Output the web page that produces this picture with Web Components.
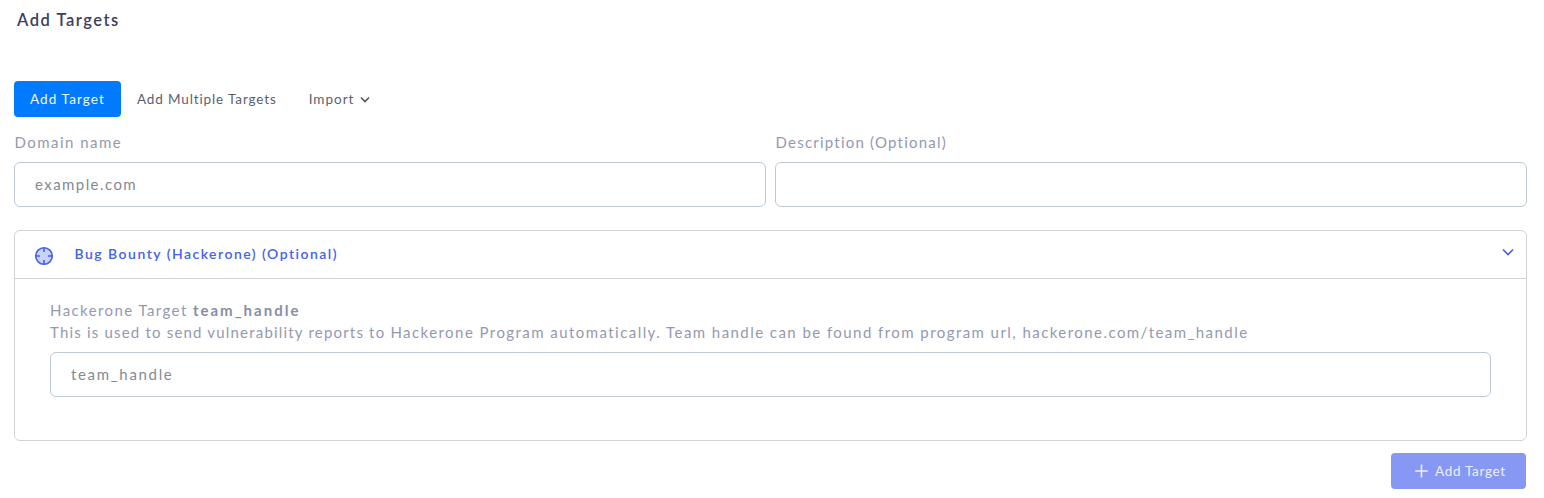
<!DOCTYPE html>
<html lang="en"><head><meta charset="utf-8"><title>Add Targets</title>
<style>body{margin:0;background:#fff;font-family:Lato,"Open Sans",sans-serif}</style></head>
<body>
<target-page></target-page>
<script>
const define = (name, html) => customElements.define(name, class extends HTMLElement {
  constructor() {
    super();
    const t = document.createElement('template');
    t.innerHTML = html;
    this.attachShadow({mode: 'open'}).append(t.content.cloneNode(true));
  }
});
define('tab-item', `<style>
:host{display:flex;align-items:center;box-sizing:border-box;height:36px;padding:0 16px 1px;border-radius:4px;font-size:13.500px;letter-spacing:1.110px;color:#5c5e70;white-space:nowrap}
:host([active]){background:#007bff;color:#f2f8ff}
</style><slot></slot>`);
define('text-field', `<style>
:host{display:block;min-width:0}
.label{height:22px;line-height:20px;font-size:15px;color:#9499b1;letter-spacing:var(--label-ls,1px);white-space:pre;margin-bottom:8px;padding-left:var(--label-pad,.5px)}
.box{box-sizing:border-box;height:45px;border:1px solid #bfc9d4;border-radius:6px;padding:0 20px 2px;display:flex;align-items:center;font-size:15px;color:#858a92;letter-spacing:var(--value-ls,1px)}
</style><div class="label"><slot name="label"></slot></div><div class="box"><slot></slot></div>`);
define('accordion-card', `<style>
:host{display:block;box-sizing:border-box;height:211px;border:1px solid #d3d3d3;border-radius:6px}
header{display:flex;align-items:center;height:47px;border-bottom:1px solid #d3d3d3;padding:0 11px 0 19px;color:#4361ee}
.target{margin-top:2px;margin-right:20.500px}
h2{margin:0;padding-bottom:2px;font-size:14px;font-weight:600;letter-spacing:1.480px;flex:1}
.chevron{margin-top:-6px}
svg{display:block}
.body{padding:21px 35px 0}
</style><header>
<svg class="target" width="20" height="20" viewBox="0 0 20 20" fill="#c7d3f7" stroke="#4361ee" stroke-width="1.600"><circle cx="10" cy="10" r="8.300"/><path d="M10 1.700V6M10 14v4.300M1.700 10H6M14 10h4.300" stroke-width="1.600"/></svg>
<h2><slot name="title"></slot></h2>
<svg class="chevron" width="14" height="10" viewBox="0 0 14 10" fill="none" stroke="#4361ee" stroke-width="1.700"><path d="M2 2.500 7 7.500 12 2.500"/></svg>
</header><div class="body"><slot></slot></div>`);
define('submit-button', `<style>
:host{display:flex;align-items:center;box-sizing:border-box;width:135px;height:36px;padding-left:24px;border-radius:4px;background:#8698f3;color:#eceffd;font-size:13.500px;letter-spacing:.700px}
svg{margin-right:7px}
span{padding-bottom:1px}
</style><svg width="13" height="14" viewBox="0 0 13 14" fill="none" stroke="#eef0fe" stroke-width="1.500" stroke-linecap="round"><path d="M6.500 1v12M.8 7h11.400"/></svg><span><slot></slot></span>`);
define('target-page', `<style>
:host{display:block;box-sizing:border-box;width:1544px;height:498px;padding:9px 17px 0 14px}
h1{margin:0 0 50px 3px;height:22px;line-height:22px;font-size:16.500px;font-weight:600;color:#3b3f5c;letter-spacing:1.520px}
nav{display:flex;margin-bottom:15px}
.multiple{letter-spacing:.870px}
.import{letter-spacing:1px}
.import svg{margin:3px 0 0 5px}
.row{display:grid;grid-template-columns:752px 752px;gap:9px;margin-bottom:23px}
.domain{--label-ls:1.480px;--value-ls:1.430px}
.desc{--label-ls:1.220px}
.handle{--label-pad:0;--label-ls:1.440px;--value-ls:1.680px}
.lead{letter-spacing:1.190px}
.hint{height:22px;line-height:20px;font-size:15px;letter-spacing:1.410px;color:#9499b1}
.hint b{letter-spacing:2px;color:#888ea8}
.end{display:flex;justify-content:flex-end;margin:12px 1px 0 0}
</style>
<h1>Add Targets</h1>
<nav><tab-item active>Add Target</tab-item><tab-item class="multiple">Add Multiple Targets</tab-item><tab-item class="import">Import<svg width="12" height="10" viewBox="0 0 12 10" fill="none" stroke="#515365" stroke-width="1.600"><path d="M2 2.500 6 6.500 10 2.500"/></svg></tab-item></nav>
<div class="row"><text-field class="domain"><span slot="label">Domain name</span>example.com</text-field><text-field class="desc"><span slot="label">Description (Optional)</span></text-field></div>
<accordion-card><span slot="title">Bug Bounty (Hackerone) (Optional)</span>
<div class="hint">Hackerone Target <b>team_handle</b></div>
<text-field class="handle"><span slot="label"><span class="lead">This is used to send vulnerability reports to </span>Hackerone Program automatically. Team handle can be found from program url, hackerone.com/team_handle</span>team_handle</text-field></accordion-card>
<div class="end"><submit-button>Add Target</submit-button></div>`);
</script></body></html>
